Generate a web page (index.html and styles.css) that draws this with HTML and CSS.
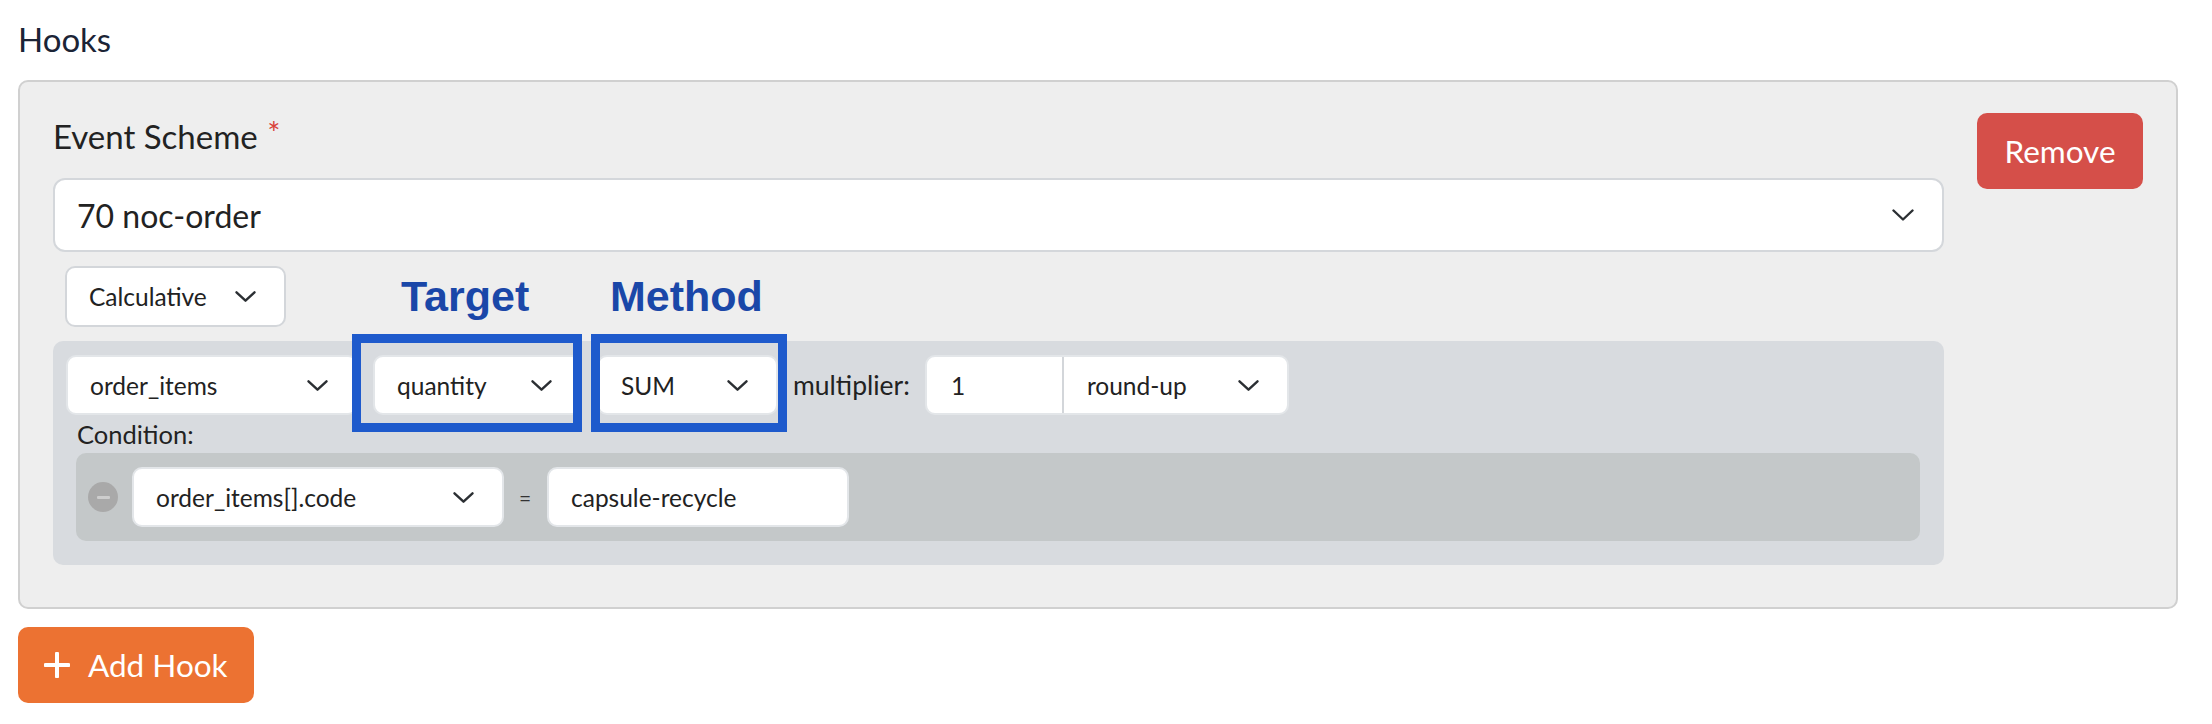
FILE: index.html
```html
<!DOCTYPE html>
<html lang="en">
<head>
<meta charset="utf-8">
<title>Hooks</title>
<link rel="stylesheet" href="styles.css">
</head>
<body>
<div class="page">
  <h2 class="section-title">Hooks</h2>
  <div class="hook-card">
    <div class="hook-main">
      <label class="field-label">Event Scheme <span class="req">*</span></label>
      <div class="select select-lg">
        <span>70 noc-order</span>
        <svg class="chev" width="22" height="12" viewBox="0 0 22 12"><polyline points="1.5,1.5 11,10.5 20.5,1.5"/></svg>
      </div>
      <div class="select select-sm type-select">
        <span>Calculative</span>
        <svg class="chev" width="21" height="11" viewBox="0 0 21 11"><polyline points="1.5,1.3 10.5,9.7 19.5,1.3"/></svg>
      </div>
      <div class="rule-box">
        <div class="rule-row">
          <div class="select select-sm w-source">
            <span>order_items</span>
            <svg class="chev" width="21" height="11" viewBox="0 0 21 11"><polyline points="1.5,1.3 10.5,9.7 19.5,1.3"/></svg>
          </div>
          <div class="select select-sm w-target">
            <span>quantity</span>
            <svg class="chev" width="21" height="11" viewBox="0 0 21 11"><polyline points="1.5,1.3 10.5,9.7 19.5,1.3"/></svg>
          </div>
          <div class="select select-sm w-method">
            <span>SUM</span>
            <svg class="chev" width="21" height="11" viewBox="0 0 21 11"><polyline points="1.5,1.3 10.5,9.7 19.5,1.3"/></svg>
          </div>
          <span class="inline-label">multiplier:</span>
          <div class="input-group">
            <div class="ig-input">1</div>
            <div class="ig-select">
              <span>round-up</span>
              <svg class="chev" width="21" height="11" viewBox="0 0 21 11"><polyline points="1.5,1.3 10.5,9.7 19.5,1.3"/></svg>
            </div>
          </div>
        </div>
        <div class="cond-label">Condition:</div>
        <div class="cond-box">
          <span class="minus-btn"><span class="minus-bar"></span></span>
          <div class="select select-sm w-field">
            <span>order_items[].code</span>
            <svg class="chev" width="21" height="11" viewBox="0 0 21 11"><polyline points="1.5,1.3 10.5,9.7 19.5,1.3"/></svg>
          </div>
          <span class="eq">=</span>
          <div class="text-input w-value">capsule-recycle</div>
        </div>
      </div>
    </div>
    <button class="btn btn-remove">Remove</button>

    <div class="annot-label annot-target-label">Target</div>
    <div class="annot-label annot-method-label">Method</div>
    <div class="annot-box annot-target-box"></div>
    <div class="annot-box annot-method-box"></div>
  </div>
  <button class="btn btn-add">
    <svg class="plus" width="26" height="26" viewBox="0 0 26 26"><line x1="13" y1="1.5" x2="13" y2="24.5"/><line x1="1.5" y1="13" x2="24.5" y2="13"/></svg>
    <span>Add Hook</span>
  </button>
</div>
</body>
</html>
```

FILE: styles.css
```css
* { box-sizing: border-box; }

html, body {
  margin: 0;
  padding: 0;
  background: #ffffff;
}

body {
  font-family: Lato, "Open Sans", "Liberation Sans", sans-serif;
  color: #212529;
}

.page {
  padding: 21px 34px 0 18px;
}

.section-title {
  margin: 0 0 23px 0;
  font-size: 33px;
  line-height: 36px;
  font-weight: 400;
  color: #1b2436;
}

.hook-card {
  position: relative;
  display: flex;
  align-items: flex-start;
  gap: 33px;
  background: #eeeeee;
  border: 2px solid #d0d0d0;
  border-radius: 10px;
  padding: 31px 33px 42px 33px;
}

.hook-main {
  flex: 1;
  min-width: 0;
  display: flex;
  flex-direction: column;
  align-items: flex-start;
}

.field-label {
  display: block;
  margin-top: 5px;
  height: 37px;
  font-size: 33px;
  line-height: 37px;
  color: #222;
}

.req {
  position: relative;
  top: -5px;
  color: #d9423b;
  font-size: 31px;
  line-height: 0;
  margin-left: 1px;
}

.select {
  display: flex;
  align-items: center;
  justify-content: space-between;
  background: #ffffff;
  border: 2px solid #d4d7db;
  color: #222;
}

.chev {
  flex: none;
  fill: none;
  stroke: #2b2f33;
  stroke-width: 2.4;
  stroke-linecap: round;
  stroke-linejoin: round;
}

.select-lg {
  align-self: stretch;
  margin-top: 23px;
  height: 74px;
  padding: 0 28px 0 22px;
  border-radius: 12px;
  font-size: 32px;
}

.select-sm {
  height: 60px;
  padding: 0 28px 0 22px;
  border-radius: 10px;
  font-size: 24.5px;
}

.type-select {
  margin-top: 14px;
  margin-left: 12px;
  width: 221px;
  height: 61px;
  border-color: #d3d6da;
}

.rule-box {
  align-self: stretch;
  margin-top: 14px;
  background: #d8dbdf;
  border-radius: 10px;
  padding: 14px 13px 24px 13px;
}

.rule-row {
  display: flex;
  align-items: center;
  gap: 15px;
}

.rule-box .select,
.text-input,
.input-group {
  border-color: #e3e6e9;
}

.w-source { width: 292px; }
.w-target { width: 209px; }
.w-method { width: 181px; }
.w-field { width: 372px; }

.inline-label {
  font-size: 26.5px;
  color: #222;
}

.input-group {
  display: flex;
  width: 364px;
  height: 60px;
  background: #ffffff;
  border: 2px solid #e3e6e9;
  border-radius: 10px;
  font-size: 24.5px;
  color: #222;
}

.ig-input {
  width: 135px;
  display: flex;
  align-items: center;
  padding-left: 24px;
}

.ig-select {
  flex: 1;
  display: flex;
  align-items: center;
  justify-content: space-between;
  padding: 0 28px 0 23px;
  border-left: 2px solid #d3d6da;
}

.cond-label {
  margin: 5px 0 5px 11px;
  font-size: 25.5px;
  line-height: 28px;
  color: #222;
}

.cond-box {
  display: flex;
  align-items: center;
  margin: 0 11px 0 10px;
  padding: 14px 12px;
  background: #c4c8c9;
  border-radius: 10px;
}

.minus-btn {
  flex: none;
  width: 30px;
  height: 30px;
  border-radius: 50%;
  background: #a9a9a9;
  display: flex;
  align-items: center;
  justify-content: center;
  margin-right: 14px;
}

.minus-bar {
  width: 13px;
  height: 3px;
  border-radius: 1px;
  background: #cdcdcd;
}

.eq {
  width: 12px;
  margin: 0 16px 0 15px;
  font-size: 21px;
  text-align: center;
  color: #333;
}

.text-input {
  width: 302px;
  height: 60px;
  display: flex;
  align-items: center;
  padding-left: 22px;
  background: #ffffff;
  border: 2px solid #e3e6e9;
  border-radius: 10px;
  font-size: 24.5px;
  color: #222;
}

.btn {
  font-family: Lato, "Open Sans", "Liberation Sans", sans-serif;
  border: none;
  color: #ffffff;
  border-radius: 10px;
  height: 76px;
  font-size: 31.5px;
  display: flex;
  align-items: center;
  cursor: pointer;
}

.btn-remove {
  flex: none;
  background: #d54f49;
  padding: 0 27px;
  width: 166px;
  justify-content: center;
}

.btn-add {
  margin-top: 18px;
  background: #ec7232;
  padding: 0 26px;
  gap: 18px;
}

.plus {
  stroke: #ffffff;
  stroke-width: 4;
  stroke-linecap: round;
}

/* annotation overlays */
.annot-label {
  position: absolute;
  top: 193px;
  font-family: "Liberation Sans", Arial, sans-serif;
  font-weight: 700;
  font-size: 43px;
  line-height: 43px;
  color: #1a47a8;
}

.annot-target-label { left: 381px; }
.annot-method-label { left: 590px; }

.annot-box {
  position: absolute;
  top: 252px;
  height: 98px;
  border: 9px solid #1e5acc;
}

.annot-target-box { left: 332px; width: 230px; }
.annot-method-box { left: 571px; width: 196px; }
```
